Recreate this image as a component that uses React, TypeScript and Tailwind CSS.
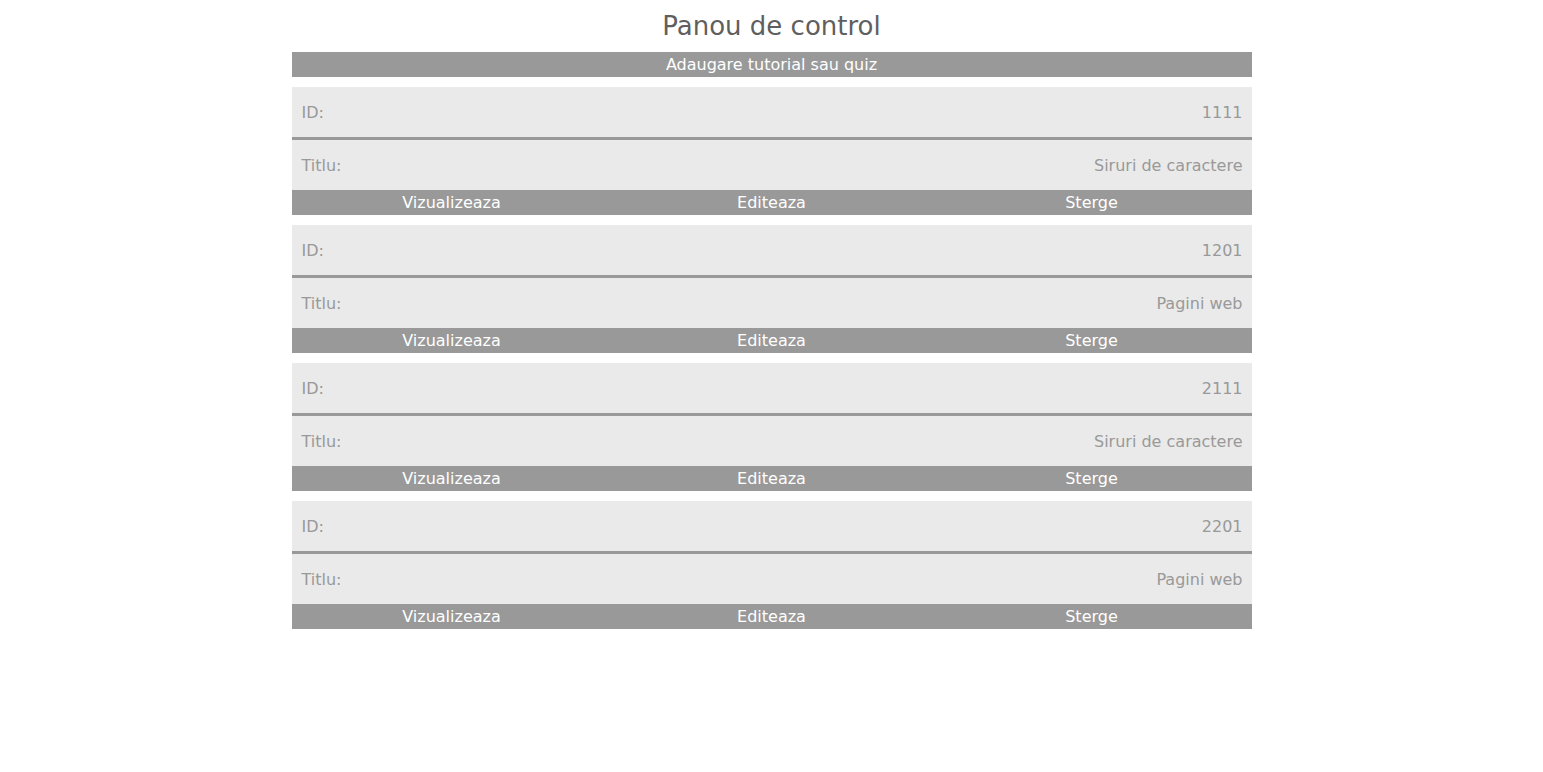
const items = [
  { id: "1111", title: "Siruri de caractere" },
  { id: "1201", title: "Pagini web" },
  { id: "2111", title: "Siruri de caractere" },
  { id: "2201", title: "Pagini web" },
];

export default function App() {
  return (
    <div
      className="min-h-screen bg-white"
      style={{ fontFamily: '"DejaVu Sans", Verdana, sans-serif' }}
    >
      <h1 className="pt-[9px] pb-[8px] text-center text-[26px] leading-[35px] font-normal text-[#5f5f5f]">
        Panou de control
      </h1>
      <div className="mx-auto w-[960px]">
        <div className="h-[25px] bg-[#999999] text-center text-[16px] leading-[25px] text-white">
          Adaugare tutorial sau quiz
        </div>

        {items.map((item) => (
          <div key={item.id} className="mt-[10px]">
            <div className="flex h-[53px] items-center justify-between border-b-[3px] border-[#999999] bg-[#eaeaea] pt-[2px] pl-[10px] pr-[9px] text-[16px] text-[#999999]">
              <span>ID:</span>
              <span>{item.id}</span>
            </div>
            <div className="flex h-[50px] items-center justify-between bg-[#eaeaea] pt-[2px] pl-[10px] pr-[9px] text-[16px] text-[#999999]">
              <span>Titlu:</span>
              <span>{item.title}</span>
            </div>
            <div className="grid h-[25px] grid-cols-3 bg-[#999999] text-center text-[16px] leading-[25px] text-white">
              <span>Vizualizeaza</span>
              <span>Editeaza</span>
              <span>Sterge</span>
            </div>
          </div>
        ))}
      </div>
    </div>
  );
}
